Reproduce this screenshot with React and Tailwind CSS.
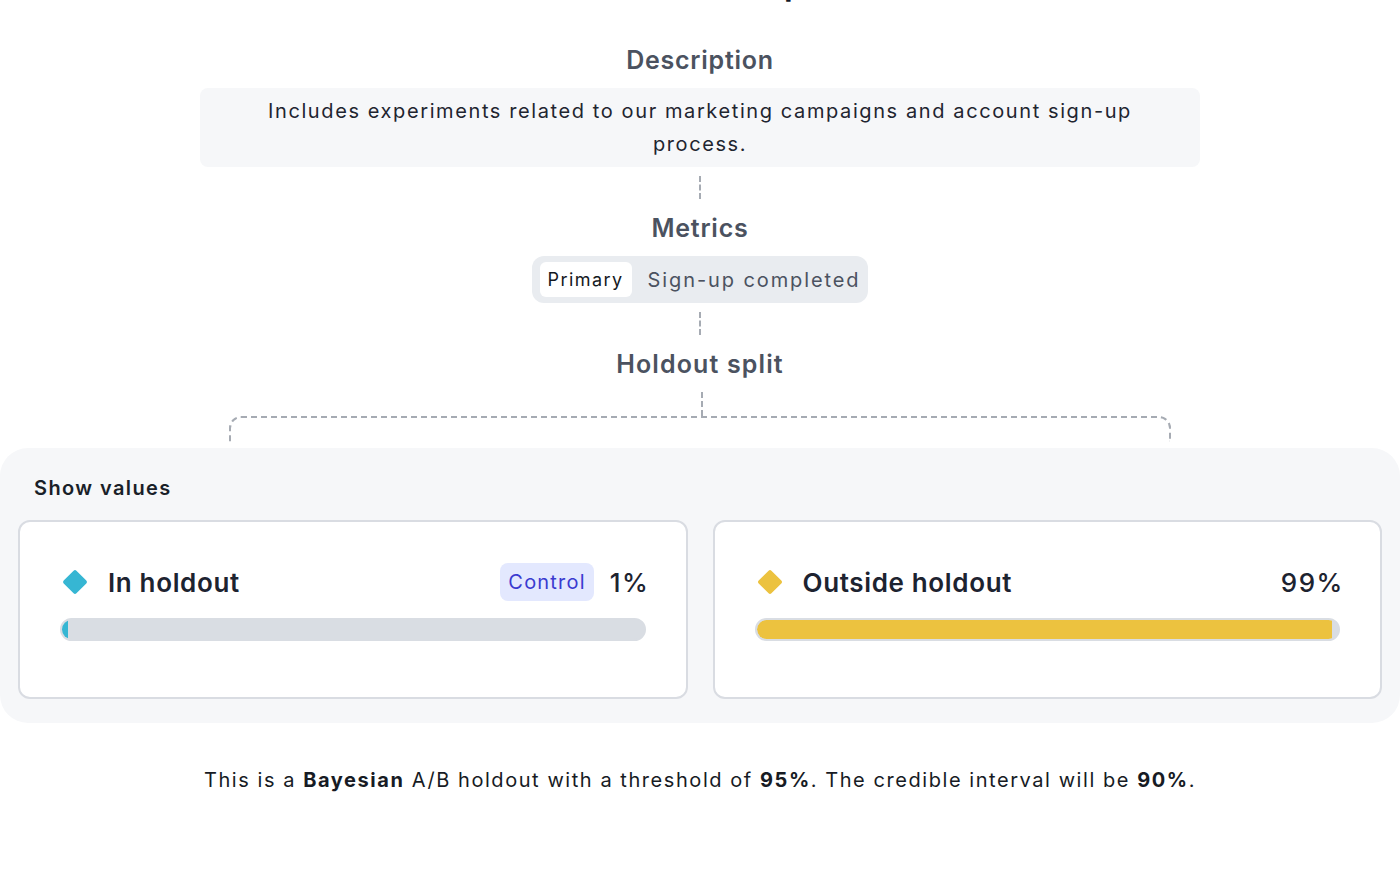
import React from 'react';

const Dashed = ({ className = '' }) => (
    <div className={`w-0 border-l-2 border-dashed border-[#a6abb3] ${className}`} />
);

const Diamond = ({ color }) => (
    <svg width="26" height="26" viewBox="0 0 26 26" className="ml-[2px] shrink-0">
        <rect x="4" y="4" width="18" height="18" rx="2" fill={color} transform="rotate(45 13 13)" />
    </svg>
);

const SplitCard = ({ label, color, percent, badge }) => (
    <div className="bg-white border-2 border-[#d9dce2] rounded-xl px-[40px] pt-[41px] pb-[56px]">
        <div className="flex items-center h-[38px]">
            <Diamond color={color} />
            <span className="ml-[20px] text-[26px] font-semibold text-[#1d2330] tracking-[0.025em]">{label}</span>
            <div className="flex-1" />
            {badge && (
                <span className="h-[38px] px-[8px] flex items-center rounded-lg bg-[#e3e8fe] text-[#3a3bd0] text-[20px] tracking-[0.06em] mr-[16px]">
                    {badge}
                </span>
            )}
            <span className="text-[26px] font-medium text-[#1d2330] tracking-[0.06em] -mr-[4px]">{percent}%</span>
        </div>
        <div className="mt-[17px] h-[23px] rounded-full bg-[#d9dde3] border-2 border-[#d9dde3] overflow-hidden">
            <div className="h-full rounded-l-full" style={{ width: `${percent}%`, backgroundColor: color }} />
        </div>
    </div>
);

const App = () => {
    return (
        <div className="w-[1400px] h-[880px] overflow-hidden bg-white font-['Inter',sans-serif]">
            <div className="flex flex-col items-center">
                <h1 className="-mt-[30px] h-[30px] text-[30px] leading-none font-bold text-[#111827]">Holdout setup</h1>

                <h2 className="mt-[44px] text-[25px] leading-[32px] font-semibold text-[#4b5260] tracking-[0.03em]">Description</h2>
                <div className="mt-[12px] w-[1000px] h-[79px] bg-[#f6f7f9] rounded-lg px-[56px] flex items-center justify-center">
                    <p className="text-center text-[20px] leading-[33px] text-[#1f2530] tracking-[0.08em]">
                        Includes experiments related to our marketing campaigns and account sign-up process.
                    </p>
                </div>

                <Dashed className="mt-[9px] h-[23px]" />

                <h2 className="mt-[13px] text-[25px] leading-[32px] font-semibold text-[#4b5260] tracking-[0.03em]">Metrics</h2>
                <div className="mt-[12px] h-[47px] flex items-center bg-[#e9ecf0] rounded-xl pl-[8px] pr-[8px]">
                    <span className="h-[35px] flex items-center px-[8px] bg-white rounded-md text-[18px] text-[#141821] tracking-[0.08em]">Primary</span>
                    <span className="ml-[16px] text-[20px] text-[#4b5260] tracking-[0.095em]">Sign-up completed</span>
                </div>

                <Dashed className="mt-[9px] h-[23px]" />

                <h2 className="mt-[13px] text-[25px] leading-[32px] font-semibold text-[#4b5260] tracking-[0.045em]">Holdout split</h2>

                <Dashed className="mt-[12px] h-[24px] ml-[4px]" />
                <div className="w-[942px] h-[26px] border-2 border-b-0 border-dashed border-[#a6abb3] rounded-t-xl" />
            </div>

            <div className="mt-[6px] bg-[#f6f7f9] rounded-[28px] pt-[26px] pb-[24px] px-[18px]">
                <div className="pl-[16px] text-[20px] leading-[28px] font-semibold text-[#1a1f29] tracking-[0.07em]">Show values</div>
                <div className="mt-[18px] grid grid-cols-2 gap-[25px]">
                    <SplitCard label="In holdout" color="#36b6d3" percent={1} badge="Control" />
                    <SplitCard label="Outside holdout" color="#ecc23f" percent={99} />
                </div>
            </div>

            <p className="mt-[43px] text-center text-[20px] leading-[28px] text-[#171b24] tracking-[0.078em]">
                This is a <b className="font-bold">Bayesian</b> A/B holdout with a threshold of <b className="font-bold">95%</b>. The credible interval will be <b className="font-bold">90%</b>.
            </p>
        </div>
    );
};

export default App;
